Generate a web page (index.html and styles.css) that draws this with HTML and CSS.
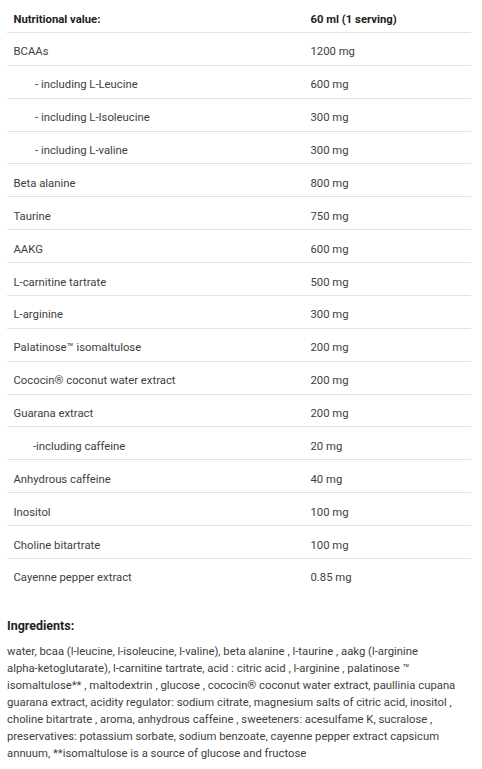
FILE: index.html
```html
<!DOCTYPE html>
<html lang="en">
<head>
<meta charset="utf-8">
<title>Nutritional value</title>
<link rel="stylesheet" href="styles.css">
</head>
<body>
<div class="page">
  <div class="table">
    <div class="row head"><div class="cell">Nutritional value:</div><div class="cell">60 ml (1 serving)</div></div>
    <div class="row"><div class="cell">BCAAs</div><div class="cell">1200 mg</div></div>
    <div class="row"><div class="cell sub">- including L-Leucine</div><div class="cell">600 mg</div></div>
    <div class="row"><div class="cell sub">- including L-Isoleucine</div><div class="cell">300 mg</div></div>
    <div class="row"><div class="cell sub">- including L-valine</div><div class="cell">300 mg</div></div>
    <div class="row"><div class="cell">Beta alanine</div><div class="cell">800 mg</div></div>
    <div class="row"><div class="cell">Taurine</div><div class="cell">750 mg</div></div>
    <div class="row"><div class="cell">AAKG</div><div class="cell">600 mg</div></div>
    <div class="row"><div class="cell">L-carnitine tartrate</div><div class="cell">500 mg</div></div>
    <div class="row"><div class="cell">L-arginine</div><div class="cell">300 mg</div></div>
    <div class="row"><div class="cell">Palatinose™ isomaltulose</div><div class="cell">200 mg</div></div>
    <div class="row"><div class="cell">Cococin® coconut water extract</div><div class="cell">200 mg</div></div>
    <div class="row"><div class="cell">Guarana extract</div><div class="cell">200 mg</div></div>
    <div class="row"><div class="cell sub2">-including caffeine</div><div class="cell">20 mg</div></div>
    <div class="row"><div class="cell">Anhydrous caffeine</div><div class="cell">40 mg</div></div>
    <div class="row"><div class="cell">Inositol</div><div class="cell">100 mg</div></div>
    <div class="row"><div class="cell">Choline bitartrate</div><div class="cell">100 mg</div></div>
    <div class="row last"><div class="cell">Cayenne pepper extract</div><div class="cell">0.85 mg</div></div>
  </div>
  <h3 class="ing-title">Ingredients:</h3>
  <p class="ing-text">water, bcaa (<span class="nw">l-leucine</span>, <span class="nw">l-isoleucine</span>, <span class="nw">l-valine</span>), beta alanine , <span class="nw">l-taurine</span> , aakg (<span class="nw">l-arginine</span> <span class="nw">alpha-ketoglutarate</span>), <span class="nw">l-carnitine</span> tartrate, acid : citric acid , <span class="nw">l-arginine</span> , palatinose ™ isomaltulose** , maltodextrin , glucose , cococin® coconut water extract, paullinia cupana guarana extract, acidity regulator: sodium citrate, magnesium salts of citric acid, inositol , choline bitartrate , aroma, anhydrous caffeine , sweeteners: acesulfame K, sucralose , preservatives: potassium sorbate, sodium benzoate, cayenne pepper extract capsicum annuum, **isomaltulose is a source of glucose and fructose</p>
</div>
</body>
</html>
```
FILE: styles.css
```css
html, body {
  margin: 0;
  padding: 0;
  background: #ffffff;
}
body {
  font-family: Roboto, "Liberation Sans", Arial, sans-serif;
  color: #404040;
}
.page {
  padding: 0 11px 0 7px;
}
.table {
  display: flex;
  flex-direction: column;
}
.row {
  display: grid;
  grid-template-columns: 297px 1fr;
  border-bottom: 1px solid #e1e1e7;
  font-size: 11.3px;
  line-height: 15.875px;
}
.row.last {
  border-bottom: none;
}
.cell {
  padding: 11.5px 6px 4.5px 6.5px;
}
.cell.sub {
  padding-left: 28px;
}
.cell.sub2 {
  padding-left: 26px;
}
.head .cell {
  font-weight: 700;
  color: #222222;
}
.ing-title {
  margin: 26px 0 0;
  font-size: 12.5px;
  line-height: 17px;
  font-weight: 700;
  color: #222222;
}
.ing-text {
  margin: 9px 0 0;
  font-size: 11.3px;
  line-height: 17px;
  color: #404040;
}
.nw {
  white-space: nowrap;
}
```
